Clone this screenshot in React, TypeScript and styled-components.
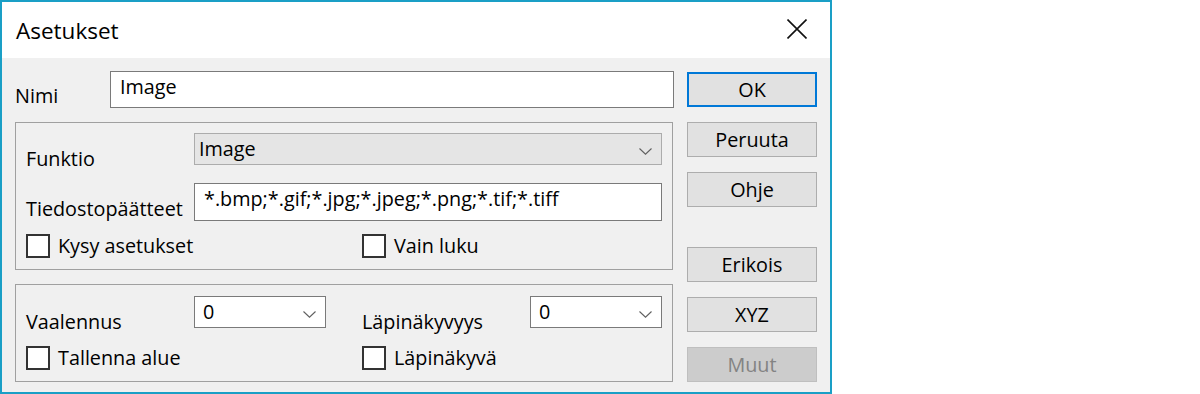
import React from "react";
import styled, { createGlobalStyle } from "styled-components";

const GlobalStyle = createGlobalStyle`
  html, body { margin: 0; padding: 0; background: #ffffff; }
  body {
    font-family: "Open Sans", "Noto Sans", sans-serif;
    font-size: 19.8px;
    color: #000000;
  }
  * { box-sizing: border-box; }
`;

const Window = styled.div`
  width: 832px;
  height: 394px;
  border: 2px solid #1a9fc6;
  background: #f0f0f0;
  display: flex;
  flex-direction: column;
`;

const TitleBar = styled.div`
  height: 56px;
  flex: none;
  background: #ffffff;
  display: flex;
  justify-content: space-between;
  align-items: flex-start;
  padding: 0 23px 0 14px;
`;

const Title = styled.div`
  font-size: 22.5px;
  line-height: 30px;
  padding-top: 14px;
`;

const CloseIcon = styled.svg`
  margin-top: 17px;
  display: block;
`;

const Body = styled.div`
  display: flex;
  align-items: flex-start;
  gap: 13px;
  padding: 13px 13px 0 13px;
`;

const LeftCol = styled.div`
  width: 659px;
  display: flex;
  flex-direction: column;
`;

const NameRow = styled.div`
  display: flex;
  align-items: flex-start;
`;

const FieldLabel = styled.label<{ $w: number; $mb: number }>`
  width: ${(p) => p.$w}px;
  flex: none;
  align-self: flex-end;
  margin-bottom: ${(p) => p.$mb}px;
  line-height: 24px;
  white-space: nowrap;
`;

const TextBox = styled.div<{ $w: number; $h: number }>`
  width: ${(p) => p.$w}px;
  height: ${(p) => p.$h}px;
  flex: none;
  background: #ffffff;
  border: 1px solid #7a7a7a;
  padding: 3px 9px 0 9px;
  line-height: 24px;
  white-space: nowrap;
  overflow: hidden;
`;

const ComboBox = styled.div<{ $w: number; $ro?: boolean }>`
  width: ${(p) => p.$w}px;
  height: 32px;
  flex: none;
  display: flex;
  align-items: flex-start;
  justify-content: space-between;
  background: ${(p) => (p.$ro ? "#e5e5e5" : "#ffffff")};
  border: 1px solid ${(p) => (p.$ro ? "#acacac" : "#7a7a7a")};
  padding: 3px 9px 0 ${(p) => (p.$ro ? 4 : 8)}px;
  line-height: 24px;
`;

const Chevron = styled.svg`
  display: block;
  margin-top: 11px;
`;

const Group = styled.div<{ $pt: number }>`
  width: 658px;
  margin-top: 14px;
  border: 1px solid #a0a0a0;
  padding: ${(p) => p.$pt}px 9px 11px 10px;
  display: grid;
  grid-template-columns: 300px 300px;
  column-gap: 36px;
`;

const FieldRow = styled.div<{ $span?: boolean; $mt?: number }>`
  display: flex;
  align-items: flex-start;
  grid-column: ${(p) => (p.$span ? "1 / -1" : "auto")};
  margin-top: ${(p) => p.$mt ?? 0}px;
`;

const CheckItem = styled.label<{ $mt?: number }>`
  display: flex;
  align-items: center;
  gap: 8px;
  height: 24px;
  line-height: 24px;
  margin-top: ${(p) => p.$mt ?? 0}px;
  white-space: nowrap;
`;

const CheckBox = styled.span`
  width: 24px;
  height: 24px;
  flex: none;
  background: #ffffff;
  border: 2px solid #333333;
`;

const RightCol = styled.div`
  width: 130px;
  padding-top: 1px;
  display: flex;
  flex-direction: column;
  gap: 15px;
`;

const Button = styled.div<{ $default?: boolean; $disabled?: boolean; $mt?: number }>`
  height: 35px;
  display: flex;
  align-items: center;
  justify-content: center;
  margin-top: ${(p) => p.$mt ?? 0}px;
  background: ${(p) => (p.$disabled ? "#cccccc" : "#e1e1e1")};
  border: ${(p) =>
    p.$default ? "2px solid #0078d7" : p.$disabled ? "1px solid #bfbfbf" : "1px solid #adadad"};
  color: ${(p) => (p.$disabled ? "#838383" : "#000000")};
  line-height: 24px;
`;

const ChevronDown = () => (
  <Chevron width="13" height="7" viewBox="0 0 13 7">
    <path d="M0.5 0.5 L6.5 6.2 L12.5 0.5" fill="none" stroke="#606060" strokeWidth="1.1" />
  </Chevron>
);

const Check = ({ label, mt }: { label: string; mt?: number }) => (
  <CheckItem $mt={mt}>
    <CheckBox />
    <span>{label}</span>
  </CheckItem>
);

export default function App() {
  return (
    <>
      <GlobalStyle />
      <Window>
        <TitleBar>
          <Title>Asetukset</Title>
          <CloseIcon width="20" height="20" viewBox="0 0 20 20">
            <path d="M0.5 0.5 L19.5 19.5 M19.5 0.5 L0.5 19.5" stroke="#111" strokeWidth="1.6" fill="none" />
          </CloseIcon>
        </TitleBar>
        <Body>
          <LeftCol>
            <NameRow>
              <FieldLabel $w={95} $mb={0}>Nimi</FieldLabel>
              <TextBox $w={564} $h={37}>Image</TextBox>
            </NameRow>
            <Group $pt={10}>
              <FieldRow $span>
                <FieldLabel $w={168} $mb={-6}>Funktio</FieldLabel>
                <ComboBox $w={468} $ro>
                  <span>Image</span>
                  <ChevronDown />
                </ComboBox>
              </FieldRow>
              <FieldRow $span $mt={18}>
                <FieldLabel $w={168} $mb={0}>Tiedostopäätteet</FieldLabel>
                <TextBox $w={468} $h={38}>*.bmp;*.gif;*.jpg;*.jpeg;*.png;*.tif;*.tiff</TextBox>
              </FieldRow>
              <Check label="Kysy asetukset" mt={13} />
              <Check label="Vain luku" mt={13} />
            </Group>
            <Group $pt={11}>
              <FieldRow>
                <FieldLabel $w={168} $mb={-6}>Vaalennus</FieldLabel>
                <ComboBox $w={132}>
                  <span>0</span>
                  <ChevronDown />
                </ComboBox>
              </FieldRow>
              <FieldRow>
                <FieldLabel $w={168} $mb={-6}>Läpinäkyvyys</FieldLabel>
                <ComboBox $w={132}>
                  <span>0</span>
                  <ChevronDown />
                </ComboBox>
              </FieldRow>
              <Check label="Tallenna alue" mt={18} />
              <Check label="Läpinäkyvä" mt={18} />
            </Group>
          </LeftCol>
          <RightCol>
            <Button $default>OK</Button>
            <Button>Peruuta</Button>
            <Button>Ohje</Button>
            <Button $mt={25}>Erikois</Button>
            <Button>XYZ</Button>
            <Button $disabled>Muut</Button>
          </RightCol>
        </Body>
      </Window>
    </>
  );
}
